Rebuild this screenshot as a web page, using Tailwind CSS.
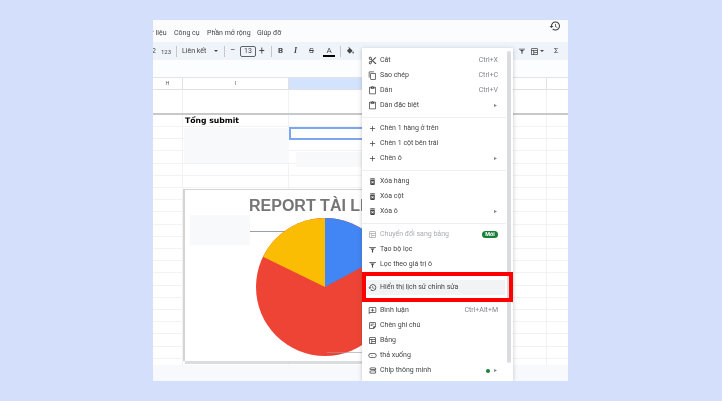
<!DOCTYPE html>
<html lang="vi">
<head>
  <meta charset="UTF-8">
  <title>Hiển thị lịch sử chỉnh sửa</title>
  <script src="https://cdn.jsdelivr.net/npm/@tailwindcss/browser@4"></script>
</head>
<body class="bg-[#d3dffb] w-[722px] h-[401px] overflow-hidden pt-[20px] pl-[153px] font-['Roboto',sans-serif] text-[#444746]">

  <svg class="hidden">
    <symbol id="i-cut" viewBox="0 0 24 24"><path fill="currentColor" d="M9.64 7.64c.23-.5.36-1.05.36-1.64 0-2.21-1.79-4-4-4S2 3.79 2 6s1.79 4 4 4c.59 0 1.14-.13 1.64-.36L10 12l-2.36 2.36C7.14 14.13 6.59 14 6 14c-2.21 0-4 1.79-4 4s1.79 4 4 4 4-1.79 4-4c0-.59-.13-1.14-.36-1.64L12 14l7 7h3v-1L9.64 7.64zM6 8c-1.1 0-2-.89-2-2s.9-2 2-2 2 .89 2 2-.9 2-2 2zm0 12c-1.1 0-2-.89-2-2s.9-2 2-2 2 .89 2 2-.9 2-2 2zm6-7.5c-.28 0-.5-.22-.5-.5s.22-.5.5-.5.5.22.5.5-.22.5-.5.5zM19 3l-6 6 2 2 7-7V3h-3z"/></symbol>
    <symbol id="i-copy" viewBox="0 0 24 24"><path fill="currentColor" d="M16 1H4c-1.1 0-2 .9-2 2v14h2V3h12V1zm3 4H8c-1.1 0-2 .9-2 2v14c0 1.1.9 2 2 2h11c1.1 0 2-.9 2-2V7c0-1.1-.9-2-2-2zm0 16H8V7h11v14z"/></symbol>
    <symbol id="i-paste" viewBox="0 0 24 24"><path fill="currentColor" d="M19 2h-4.18C14.4.84 13.3 0 12 0c-1.3 0-2.4.84-2.82 2H5c-1.1 0-2 .9-2 2v16c0 1.1.9 2 2 2h14c1.1 0 2-.9 2-2V4c0-1.1-.9-2-2-2zm-7 0c.55 0 1 .45 1 1s-.45 1-1 1-1-.45-1-1 .45-1 1-1zm7 18H5V4h2v3h10V4h2v16z"/></symbol>
    <symbol id="i-plus" viewBox="0 0 24 24"><path fill="currentColor" d="M19 13h-6v6h-2v-6H5v-2h6V5h2v6h6v2z"/></symbol>
    <symbol id="i-trash" viewBox="0 0 24 24"><path fill="currentColor" d="M6 19c0 1.1.9 2 2 2h8c1.1 0 2-.9 2-2V7H6v12zm2.46-7.12l1.41-1.41L12 12.59l2.12-2.12 1.41 1.41L13.41 14l2.12 2.12-1.41 1.41L12 15.41l-2.12 2.12-1.41-1.41L10.59 14l-2.13-2.12zM15.5 4l-1-1h-5l-1 1H5v2h14V4z"/></symbol>
    <symbol id="i-table" viewBox="0 0 24 24"><path fill="currentColor" d="M19 3H5c-1.1 0-2 .9-2 2v14c0 1.1.9 2 2 2h14c1.1 0 2-.9 2-2V5c0-1.1-.9-2-2-2zM5 5h14v3H5V5zm0 5h4v9H5v-9zm14 9h-8v-3h8v3zm0-5h-8v-4h8v4z"/></symbol>
    <symbol id="i-filter" viewBox="0 0 24 24"><path fill="currentColor" d="M3 5h18v2.500H3V5zm3 4h12l-4.500 4.500V20h-3v-6.500L6 9z"/></symbol>
    <symbol id="i-history" viewBox="0 0 24 24"><path fill="currentColor" d="M13 3c-4.970 0-9 4.030-9 9H1l3.890 3.890.07.14L9 12H6c0-3.870 3.130-7 7-7s7 3.130 7 7-3.130 7-7 7c-1.930 0-3.680-.79-4.940-2.060l-1.420 1.420C8.270 19.990 10.510 21 13 21c4.970 0 9-4.030 9-9s-4.030-9-9-9zm-1 5v5l4.280 2.540.72-1.210-3.500-2.080V8H12z"/></symbol>
    <symbol id="i-comment" viewBox="0 0 24 24"><path fill="currentColor" d="M20 3H4c-1.100 0-2 .9-2 2v17l4-4h14c1.100 0 2-.9 2-2V5c0-1.100-.9-2-2-2zm0 13H5.200L4 17.200V5h16v11zM11 6.500h2V10h3.500v2H13v3h-2v-3H7.500v-2H11V6.500z"/></symbol>
    <symbol id="i-note" viewBox="0 0 24 24"><path fill="currentColor" d="M19 3H5c-1.100 0-2 .9-2 2v14c0 1.100.9 2 2 2h10l6-6V5c0-1.100-.9-2-2-2zM5 19V5h14v9h-5v5H5zm2-10h10V7H7v2zm0 4h5v-2H7v2z"/></symbol>
    <symbol id="i-drop" viewBox="0 0 24 24"><path fill="currentColor" d="M7 6h10a6 6 0 0 1 0 12H7A6 6 0 0 1 7 6zm0 2a4 4 0 0 0 0 8h10a4 4 0 0 0 0-8H7zm1.500 3h4l-2 2.500-2-2.500z"/></symbol>
    <symbol id="i-chip" viewBox="0 0 24 24"><path fill="currentColor" d="M8 4h10a4 4 0 0 1 0 8h-1v-2h1a2 2 0 0 0 0-4H8a2 2 0 0 0-2 2H4a4 4 0 0 1 4-4zM6 8h10a4 4 0 0 1 4 4h-2a2 2 0 0 0-2-2H6a2 2 0 0 0 0 4H5a4 4 0 0 1 1-6zm2 4h10a4 4 0 0 1 0 8H8a4 4 0 0 1 0-8zm0 2a2 2 0 0 0 0 4h10a2 2 0 0 0 0-4H8z"/></symbol>
  </svg>

  <div class="relative w-[415px] h-[361px] bg-white flex flex-col overflow-hidden blur-[0.4px]">

    <!-- menu bar -->
    <div class="h-[22px] bg-[#fbfcfe] flex items-end pb-[4px] text-[7px] leading-[10px] text-[#444746] shrink-0 whitespace-nowrap">
      <span class="-ml-[8px] w-[29px]">Dữ liệu</span>
      <span class="w-[33px]">Công cụ</span>
      <span class="w-[50px]">Phần mở rộng</span>
      <span>Giúp đỡ</span>
      <svg class="ml-auto mr-[7px] mb-[6px] w-[12px] h-[12px] text-[#3c4043]"><use href="#i-history"/></svg>
    </div>

    <!-- toolbar -->
    <div class="h-[18px] bg-[#eff3fa] flex items-center text-[7px] text-[#444746] shrink-0">
      <span class="w-[9px] -ml-[1px]">2</span>
      <span class="w-[15px] text-[6px]">123</span>
      <span class="w-px h-[11px] bg-[#c7c7c7]"></span>
      <span class="ml-[5px] w-[32px] text-[7px]">Liên kết</span>
      <span class="w-0 h-0 border-x-[2.5px] border-x-transparent border-t-[2.5px] border-t-[#444746]"></span>
      <span class="ml-[6px] w-px h-[11px] bg-[#c7c7c7]"></span>
      <span class="ml-[5px] w-[9px] text-[9px]">−</span>
      <span class="ml-[1px] w-[16px] h-[11px] border border-[#5f6368] rounded-[2px] flex items-center justify-center text-[7px]">13</span>
      <span class="ml-[3px] w-[10px] text-[10px] leading-none">+</span>
      <span class="ml-[2px] w-px h-[11px] bg-[#c7c7c7]"></span>
      <span class="ml-[6px] w-[15px] font-bold text-[8px]">B</span>
      <span class="ml-[1px] w-[15px] italic font-bold text-[8px] font-['Liberation_Serif',serif]">I</span>
      <span class="w-[14px] line-through text-[8px]">S</span>
      <span class="w-[12px] text-center text-[8px] leading-[9px] border-b-2 border-black">A</span>
      <span class="ml-[5px] w-px h-[11px] bg-[#c7c7c7]"></span>
      <svg class="ml-[5px] w-[9px] h-[9px]" viewBox="0 0 24 24"><path fill="currentColor" d="M16.560 8.940 7.620 0 6.210 1.410l2.380 2.380-5.150 5.150c-.59.59-.59 1.540 0 2.120l5.500 5.500c.29.290.68.440 1.060.44s.77-.15 1.060-.44l5.500-5.500c.59-.58.59-1.530 0-2.120zM19 11.500s-2 2.170-2 3.500c0 1.100.9 2 2 2s2-.9 2-2c0-1.330-2-3.500-2-3.500z"/></svg>
      <svg class="ml-[6px] w-[9px] h-[9px]"><use href="#i-table"/></svg>
      <div class="ml-[6px] w-[139px] flex justify-between pl-[4px] pr-[12px]">
        <svg class="w-[9px] h-[9px]"><use href="#i-table"/></svg>
        <svg class="w-[9px] h-[9px]"><use href="#i-table"/></svg>
        <svg class="w-[9px] h-[9px]"><use href="#i-table"/></svg>
        <svg class="w-[9px] h-[9px]"><use href="#i-table"/></svg>
      </div>
      <svg class="ml-[3px] w-[8px] h-[8px]"><use href="#i-filter"/></svg>
      <svg class="ml-[4px] w-[9px] h-[9px]"><use href="#i-table"/></svg>
      <span class="ml-[1px] w-0 h-0 border-x-[2px] border-x-transparent border-t-[2px] border-t-[#444746]"></span>
      <span class="ml-[10px] text-[8px]">Σ</span>
    </div>

    <!-- formula bar -->
    <div class="h-[17px] bg-[#fcfdfe] shrink-0"></div>

    <!-- sheet grid -->
    <div class="grid grid-cols-[30px_106px_258px_21px] grid-rows-[12px_23px_2px_12px_1fr] flex-1 border-t border-[#e1e3e6]">
      <div class="border-r border-b border-[#dfe1e5] flex items-center justify-center text-[5.5px] text-[#5f6368]">H</div>
      <div class="border-r border-b border-[#dfe1e5] flex items-center justify-center text-[5.5px] text-[#5f6368]">I</div>
      <div class="border-r border-b border-[#dfe1e5]"><div class="w-[200px] h-full bg-[#d3e3fd]"></div></div>
      <div class="border-b border-[#dfe1e5]"></div>

      <div class="border-r border-[#f1f2f3]"></div>
      <div class="border-r border-[#f1f2f3]"></div>
      <div class="border-r border-[#f1f2f3]"></div>
      <div></div>

      <div class="col-span-4 bg-[#c6c8ca]"></div>

      <div class="border-r border-b border-[#f1f2f3]"></div>
      <div class="border-r border-b border-[#f1f2f3] pl-[2px] text-[7.7px] leading-[12px] font-bold text-black font-['DejaVu_Sans',sans-serif]">Tổng submit</div>
      <div class="border-r border-b border-[#f1f2f3]"></div>
      <div class="border-b border-[#f1f2f3]"></div>

      <div class="border-r border-[#f1f2f3] bg-[repeating-linear-gradient(to_bottom,transparent_0,transparent_11.2px,#f1f2f3_11.2px,#f1f2f3_12.2px)]"></div>
      <div class="border-r border-[#f1f2f3] bg-[repeating-linear-gradient(to_bottom,transparent_0,transparent_11.2px,#f1f2f3_11.2px,#f1f2f3_12.2px)]"></div>
      <div class="border-r border-[#f1f2f3] bg-[repeating-linear-gradient(to_bottom,transparent_0,transparent_11.2px,#f1f2f3_11.2px,#f1f2f3_12.2px)]"></div>
      <div class="bg-[repeating-linear-gradient(to_bottom,transparent_0,transparent_11.2px,#f1f2f3_11.2px,#f1f2f3_12.2px)]"></div>
    </div>

    <!-- bottom sheet tabs -->
    <div class="h-[16px] bg-[#f8f9fd] shrink-0"></div>

    <!-- blanked cells and selected cell -->
    <div class="absolute left-[31px] top-[108px] w-[105px] h-[35px] bg-[#f8f9fa]"></div>
    <div class="absolute left-[143px] top-[132px] w-[70px] h-[15px] bg-[#f8f9fa]"></div>
    <div class="absolute left-[136px] top-[107px] w-[75px] h-[13px] border-2 border-[#7aa7ee]"></div>

    <!-- embedded chart -->
    <div class="absolute left-[30px] top-[169px] w-[300px] h-[172px] bg-white border-l-2 border-t border-[#d4d4d4] overflow-hidden">
      <div class="absolute left-[64px] top-[6px] whitespace-nowrap text-[16px] leading-[20px] font-bold font-['Liberation_Sans',sans-serif] text-[#757575]">REPORT TÀI LIỆU</div>
      <div class="absolute left-[5px] top-[25px] w-[60px] h-[30px] bg-[#f8f9fa]"></div>
      <div class="absolute left-[65px] top-[41px] w-[41px] h-px bg-[#9aa0a6]"></div>
      <svg class="absolute left-[70px] top-[27px] w-[140px] h-[140px]" viewBox="-70 -70 140 140">
        <circle r="69" fill="#ee4435"/>
        <path d="M0 0V-69A69 69 0 0 1 60.700 -32.800Z" fill="#4285f4"/>
        <path d="M0 0V-69A69 69 0 0 0 -62 -30.300Z" fill="#fbbc04"/>
      </svg>
      <div class="absolute left-[142px] top-[162px] w-[60px] h-px bg-[#9aa0a6]/60"></div>
    </div>
    <div class="absolute left-[32px] top-[341px] w-[300px] h-[3px] bg-[#dadce0]"></div>

    <!-- context menu -->
    <div class="absolute left-[209px] top-[28px] w-[151px] h-[333px] bg-white shadow-[0_1px_4px_rgba(60,64,67,0.3)] pt-[5px] text-[7px] leading-[15px] text-[#444746]">
      <div class="flex items-center h-[15px] pl-[6px] pr-[15px]"><svg class="w-[9px] h-[9px] mr-[3px]"><use href="#i-cut"/></svg><span>Cắt</span><span class="ml-auto text-[#80868b]">Ctrl+X</span></div>
      <div class="flex items-center h-[15px] pl-[6px] pr-[15px]"><svg class="w-[9px] h-[9px] mr-[3px]"><use href="#i-copy"/></svg><span>Sao chép</span><span class="ml-auto text-[#80868b]">Ctrl+C</span></div>
      <div class="flex items-center h-[15px] pl-[6px] pr-[15px]"><svg class="w-[9px] h-[9px] mr-[3px]"><use href="#i-paste"/></svg><span>Dán</span><span class="ml-auto text-[#80868b]">Ctrl+V</span></div>
      <div class="flex items-center h-[15px] pl-[6px] pr-[15px]"><svg class="w-[9px] h-[9px] mr-[3px]"><use href="#i-paste"/></svg><span>Dán đặc biệt</span><span class="ml-auto text-[5px] text-[#80868b]">►</span></div>
      <div class="h-px bg-[#eceef0] my-[3.5px] mr-[7px]"></div>
      <div class="flex items-center h-[15px] pl-[6px] pr-[15px]"><svg class="w-[9px] h-[9px] mr-[3px]"><use href="#i-plus"/></svg><span>Chèn 1 hàng ở trên</span></div>
      <div class="flex items-center h-[15px] pl-[6px] pr-[15px]"><svg class="w-[9px] h-[9px] mr-[3px]"><use href="#i-plus"/></svg><span>Chèn 1 cột bên trái</span></div>
      <div class="flex items-center h-[15px] pl-[6px] pr-[15px]"><svg class="w-[9px] h-[9px] mr-[3px]"><use href="#i-plus"/></svg><span>Chèn ô</span><span class="ml-auto text-[5px] text-[#80868b]">►</span></div>
      <div class="h-px bg-[#eceef0] my-[3.5px] mr-[7px]"></div>
      <div class="flex items-center h-[15px] pl-[6px] pr-[15px]"><svg class="w-[9px] h-[9px] mr-[3px]"><use href="#i-trash"/></svg><span>Xóa hàng</span></div>
      <div class="flex items-center h-[15px] pl-[6px] pr-[15px]"><svg class="w-[9px] h-[9px] mr-[3px]"><use href="#i-trash"/></svg><span>Xóa cột</span></div>
      <div class="flex items-center h-[15px] pl-[6px] pr-[15px]"><svg class="w-[9px] h-[9px] mr-[3px]"><use href="#i-trash"/></svg><span>Xóa ô</span><span class="ml-auto text-[5px] text-[#80868b]">►</span></div>
      <div class="h-px bg-[#eceef0] my-[3.5px] mr-[7px]"></div>
      <div class="flex items-center h-[15px] pl-[6px] pr-[15px] text-[#a8abaf]"><svg class="w-[9px] h-[9px] mr-[3px]"><use href="#i-table"/></svg><span>Chuyển đổi sang bảng</span><span class="ml-auto h-[7px] w-[16px] rounded-full bg-[#188038] text-white text-[5.5px] leading-[7px] text-center font-bold">Mới</span></div>
      <div class="flex items-center h-[15px] pl-[6px] pr-[15px]"><svg class="w-[9px] h-[9px] mr-[3px]"><use href="#i-filter"/></svg><span>Tạo bộ lọc</span></div>
      <div class="flex items-center h-[15px] pl-[6px] pr-[15px]"><svg class="w-[9px] h-[9px] mr-[3px]"><use href="#i-filter"/></svg><span>Lọc theo giá trị ô</span></div>
      <div class="h-px my-[3.5px]"></div>
      <div class="flex items-center h-[15px] ml-[5px] mr-[8px] pl-px pr-[7px] bg-[#f1f3f4]"><svg class="w-[9px] h-[9px] mr-[3px]"><use href="#i-history"/></svg><span>Hiển thị lịch sử chỉnh sửa</span></div>
      <div class="h-px my-[3.5px]"></div>
      <div class="flex items-center h-[15px] pl-[6px] pr-[15px]"><svg class="w-[9px] h-[9px] mr-[3px]"><use href="#i-comment"/></svg><span>Bình luận</span><span class="ml-auto text-[#80868b]">Ctrl+Alt+M</span></div>
      <div class="flex items-center h-[15px] pl-[6px] pr-[15px]"><svg class="w-[9px] h-[9px] mr-[3px]"><use href="#i-note"/></svg><span>Chèn ghi chú</span></div>
      <div class="flex items-center h-[15px] pl-[6px] pr-[15px]"><svg class="w-[9px] h-[9px] mr-[3px]"><use href="#i-table"/></svg><span>Bảng</span></div>
      <div class="flex items-center h-[15px] pl-[6px] pr-[15px]"><svg class="w-[9px] h-[9px] mr-[3px]"><use href="#i-drop"/></svg><span>thả xuống</span></div>
      <div class="flex items-center h-[15px] pl-[6px] pr-[15px]"><svg class="w-[9px] h-[9px] mr-[3px]"><use href="#i-chip"/></svg><span>Chip thông minh</span><span class="ml-auto w-[4px] h-[4px] rounded-full bg-[#188038] mr-[3px]"></span><span class="text-[5px] text-[#80868b]">►</span></div>

      <!-- scrollbar and red highlight frame -->
      <div class="absolute left-[145px] top-[3px] bottom-[18px] w-[4px] rounded-full bg-[#dadce0]"></div>
      <div class="absolute left-0 top-[224px] w-[151px] h-[30px] border-4 border-[#ff0000]"></div>
    </div>
  </div>

</body>
</html>
